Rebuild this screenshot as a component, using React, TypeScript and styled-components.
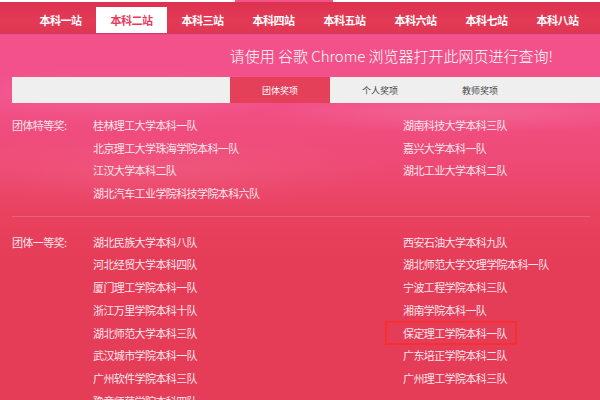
import React from "react";
import styled, { createGlobalStyle, css } from "styled-components";

const GlobalStyle = createGlobalStyle`
  html, body {
    margin: 0;
    padding: 0;
    width: 600px;
    height: 400px;
    overflow: hidden;
  }
  body {
    font-family: "Noto Sans CJK SC", "Noto Sans", sans-serif;
    background:
      radial-gradient(ellipse 260px 40px at 120px 95px, rgba(255, 255, 255, 0.10), transparent 70%),
      radial-gradient(ellipse 300px 30px at 470px 112px, rgba(255, 255, 255, 0.12), transparent 70%),
      radial-gradient(ellipse 340px 50px at 160px 170px, rgba(255, 255, 255, 0.07), transparent 70%),
      linear-gradient(180deg, #f3528a 0px, #f2508a 90px, #ee4a76 160px, #e9425f 215px, #e53c57 260px, #e53c57 400px);
  }
`;

const TOP_NAV = ["本科一站", "本科二站", "本科三站", "本科四站", "本科五站", "本科六站", "本科七站", "本科八站"];
const AWARD_TABS = ["团体奖项", "个人奖项", "教师奖项"];

const SECTIONS = [
  {
    title: "团体特等奖:",
    teams: [
      "桂林理工大学本科一队",
      "湖南科技大学本科三队",
      "北京理工大学珠海学院本科一队",
      "嘉兴大学本科一队",
      "江汉大学本科二队",
      "湖北工业大学本科二队",
      "湖北汽车工业学院科技学院本科六队",
    ],
  },
  {
    title: "团体一等奖:",
    teams: [
      "湖北民族大学本科八队",
      "西安石油大学本科九队",
      "河北经贸大学本科四队",
      "湖北师范大学文理学院本科一队",
      "厦门理工学院本科一队",
      "宁波工程学院本科三队",
      "浙江万里学院本科十队",
      "湘南学院本科一队",
      "湖北师范大学本科三队",
      "保定理工学院本科一队",
      "武汉城市学院本科一队",
      "广东培正学院本科二队",
      "广州软件学院本科三队",
      "广州理工学院本科三队",
      "豫章师范学院本科四队",
    ],
  },
];

const HIGHLIGHT = "保定理工学院本科一队";

export default function App() {
  return (
    <>
      <GlobalStyle />
      <Page>
        <TopStrip>
          <StripPiece $width={235} />
          <StripPiece $width={267} $offset={98} />
        </TopStrip>
        <NavBar>
          {TOP_NAV.map((name, i) => (
            <NavItem key={name} $active={i === 1}>
              {name}
            </NavItem>
          ))}
        </NavBar>
        <Notice>请使用 谷歌 Chrome 浏览器打开此网页进行查询!</Notice>
        <TabBar>
          <TabSpacer />
          {AWARD_TABS.map((name, i) => (
            <Tab key={name} $active={i === 0}>
              {name}
            </Tab>
          ))}
        </TabBar>
        {SECTIONS.map((section, si) => (
          <Section key={section.title} $first={si === 0} $last={si === SECTIONS.length - 1}>
            <SectionTitle>{section.title}</SectionTitle>
            <TeamGrid>
              {section.teams.map((team) => (
                <Team key={team} $marked={team === HIGHLIGHT}>
                  {team}
                </Team>
              ))}
            </TeamGrid>
          </Section>
        ))}
      </Page>
    </>
  );
}

const Page = styled.div`
  width: 600px;
  height: 400px;
  overflow: hidden;
  display: flex;
  flex-direction: column;
`;

const TopStrip = styled.div`
  display: flex;
  height: 2px;
  flex-shrink: 0;
`;

const StripPiece = styled.div<{ $width: number; $offset?: number }>`
  width: ${({ $width }) => $width}px;
  margin-left: ${({ $offset = 0 }) => $offset}px;
  background: #ffffff;
`;

const NavBar = styled.div`
  display: flex;
  align-items: flex-end;
  height: 31px;
  padding-left: 25px;
  flex-shrink: 0;
  background: linear-gradient(180deg, #dc3250 0%, #e33a56 60%, #df3652 100%);
  box-shadow: 0 1px 1px rgba(150, 20, 50, 0.35);
`;

const NavItem = styled.div<{ $active?: boolean }>`
  width: 71px;
  height: 26px;
  display: flex;
  align-items: center;
  justify-content: center;
  font-size: 11px;
  font-weight: 700;
  letter-spacing: -0.5px;
  color: #ffffff;
  ${({ $active }) =>
    $active &&
    css`
      background: #ffffff;
      color: #e63a5a;
    `}
`;

const Notice = styled.div`
  height: 44px;
  display: flex;
  align-items: center;
  justify-content: flex-end;
  padding-right: 47px;
  font-size: 15px;
  font-weight: 300;
  color: #ffffff;
  flex-shrink: 0;
`;

const TabBar = styled.div`
  display: flex;
  height: 26px;
  margin-left: 12px;
  background: #efefef;
  flex-shrink: 0;
`;

const TabSpacer = styled.div`
  width: 218px;
`;

const Tab = styled.div<{ $active?: boolean }>`
  width: 100px;
  display: flex;
  align-items: center;
  justify-content: center;
  font-size: 9px;
  color: #444444;
  ${({ $active }) =>
    $active &&
    css`
      background: #e5405a;
      color: #ffffff;
    `}
`;

const Section = styled.div<{ $first?: boolean; $last?: boolean }>`
  display: flex;
  margin: 0 10px 0 12px;
  padding: ${({ $first }) => ($first ? "11px 0 11px" : "14px 0 0")};
  flex-shrink: 0;
  ${({ $last }) =>
    !$last &&
    css`
      border-bottom: 1px solid rgba(255, 255, 255, 0.16);
    `}
`;

const SectionTitle = styled.div`
  width: 81px;
  height: 22.7px;
  line-height: 22.7px;
  font-size: 11px;
  letter-spacing: -0.6px;
  color: #fbe3ea;
`;

const TeamGrid = styled.div`
  display: grid;
  grid-template-columns: 310px 1fr;
  grid-auto-rows: 22.7px;
`;

const Team = styled.div<{ $marked?: boolean }>`
  position: relative;
  line-height: 22.7px;
  font-size: 11px;
  letter-spacing: -0.6px;
  color: #fbe6ec;
  white-space: nowrap;
  ${({ $marked }) =>
    $marked &&
    css`
      &::after {
        content: "";
        position: absolute;
        left: -18px;
        top: -1px;
        width: 132px;
        height: 24px;
        box-sizing: border-box;
        border: 2px solid #f5302f;
      }
    `}
`;
